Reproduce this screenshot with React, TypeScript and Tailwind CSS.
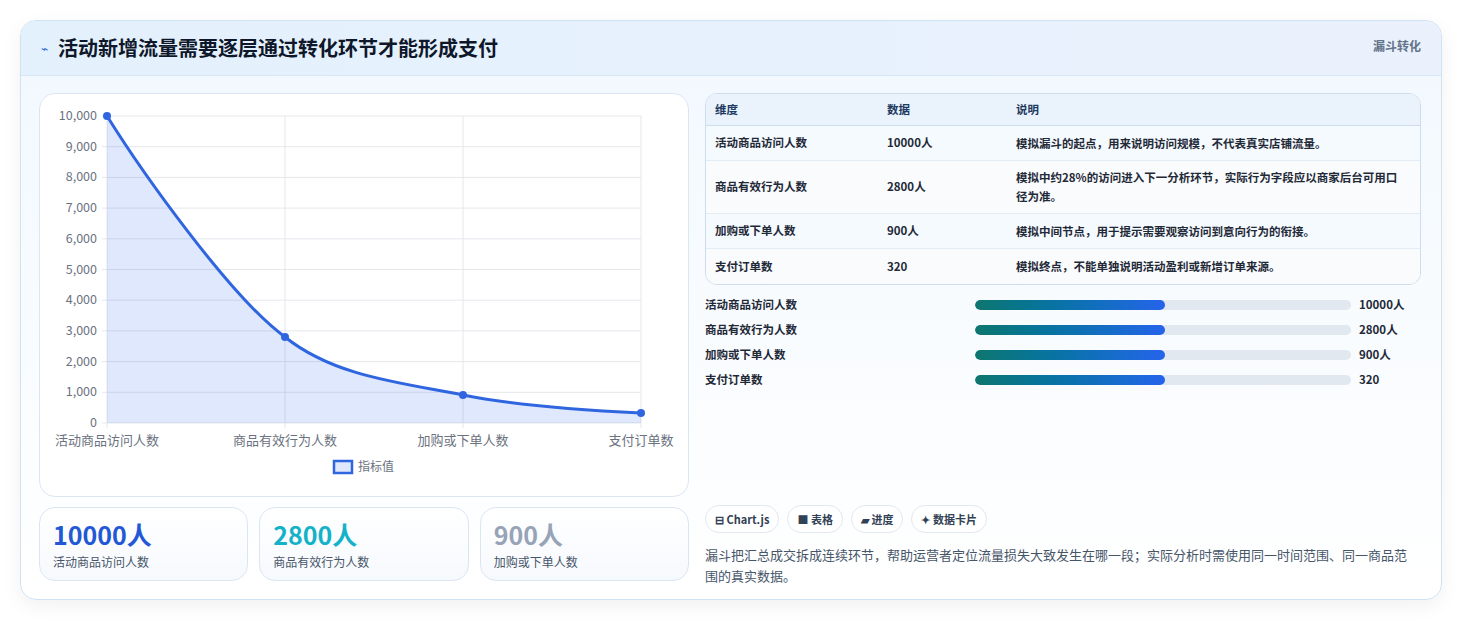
import React from "react";

const yTicks = [10000, 9000, 8000, 7000, 6000, 5000, 4000, 3000, 2000, 1000, 0];
const xs = [67, 245, 423, 601];
const labels = ["活动商品访问人数", "商品有效行为人数", "加购或下单人数", "支付订单数"];
const yOf = (v: number) => 329 - (v / 10000) * 307;

function Chart() {
  const curve = "M67,22 C100,75 190,203 245,243 C295,283 363,289 423,301 C483,313 560,317 601,319";
  return (
    <svg width="648" height="402" className="block">
      {yTicks.map((t) => (
        <g key={t}>
          <line x1={62} x2={601} y1={yOf(t)} y2={yOf(t)} stroke="#e5e7eb" />
          <text x={57} y={yOf(t) + 4} textAnchor="end" fontSize="12.5" fill="#6b7280">{t.toLocaleString("en-US")}</text>
        </g>
      ))}
      {xs.map((x, i) => (
        <g key={x}>
          <line x1={x} x2={x} y1={22} y2={334} stroke="#e5e7eb" />
          <text x={i === 0 ? 67 : i === 3 ? 601 : x} y={351} textAnchor="middle" fontSize="13" fill="#6b7280">{labels[i]}</text>
        </g>
      ))}
      <path d={curve + " L601,329 L67,329 Z"} fill="rgba(37,99,235,0.15)" />
      <path d={curve} fill="none" stroke="#2f66e0" strokeWidth="3" />
      {[[67, 22], [245, 243], [423, 301], [601, 319]].map(([x, y]) => (
        <circle key={x} cx={x} cy={y} r="4" fill="#2f66e0" />
      ))}
      <rect x={294} y={367} width={18} height={12} fill="rgba(37,99,235,0.15)" stroke="#2f66e0" strokeWidth="2.5" />
      <text x={318} y={377} fontSize="12" fill="#6b7280">指标值</text>
    </svg>
  );
}

const rows = [
  ["活动商品访问人数", "10000人", "模拟漏斗的起点，用来说明访问规模，不代表真实店铺流量。"],
  ["商品有效行为人数", "2800人", "模拟中约28%的访问进入下一分析环节，实际行为字段应以商家后台可用口径为准。"],
  ["加购或下单人数", "900人", "模拟中间节点，用于提示需要观察访问到意向行为的衔接。"],
  ["支付订单数", "320", "模拟终点，不能单独说明活动盈利或新增订单来源。"],
];

export default function App() {
  return (
    <div className="w-[1462px] h-[621px] bg-white p-5 pb-0 overflow-hidden" style={{ fontFamily: '"Noto Sans CJK SC", "Noto Sans", sans-serif' }}>
      <div className="w-[1422px] h-[580px] rounded-2xl border border-[#cfe3f3] bg-gradient-to-b from-[#f1f8fe] to-white shadow-[0_6px_20px_rgba(15,23,42,0.06)] overflow-hidden">
        <div className="h-[55px] flex items-center justify-between px-5 bg-gradient-to-r from-[#e3f1fd] to-[#eaf1fc] border-b border-[#d6e8f7]">
          <div className="flex items-center gap-2.5">
            <span className="text-[#2f66e0] text-[12px]">⌁</span>
            <span className="text-[20px] font-bold text-[#0f172a]">活动新增流量需要逐层通过转化环节才能形成支付</span>
          </div>
          <span className="text-[12px] font-semibold text-[#64748b] self-start mt-4">漏斗转化</span>
        </div>
        <div className="flex gap-4 pl-[18px] pr-5 pt-[17px]">
          <div className="w-[650px] flex flex-col gap-[10px]">
            <div className="h-[404px] rounded-2xl border border-[#dbe6f3] bg-white">
              <Chart />
            </div>
            <div className="grid grid-cols-3 gap-[11px]">
              {[["10000人", "text-[#2257d6]", "活动商品访问人数"], ["2800人", "text-[#14b2c8]", "商品有效行为人数"], ["900人", "text-[#97a3b6]", "加购或下单人数"]].map(([v, c, l]) => (
                <div key={l} className="h-[74px] rounded-2xl border border-[#dbe6f3] bg-gradient-to-b from-white to-[#f6f9fd] px-[13px] pt-[9px]">
                  <div className={`text-[25px] font-bold leading-[34px] ${c}`}>{v}</div>
                  <div className="text-[12px] text-[#475569] mt-[2px]">{l}</div>
                </div>
              ))}
            </div>
          </div>
          <div className="w-[716px] flex flex-col">
            <div className="rounded-xl border border-[#cfdcec] overflow-hidden bg-white">
              <div className="flex h-[32px] items-center bg-[#eaf3fc] border-b border-[#cfdcec] text-[11.5px] font-bold text-[#1e3a5f]">
                <div className="w-[181px] pl-[9px]">维度</div>
                <div className="w-[129px]">数据</div>
                <div className="flex-1">说明</div>
              </div>
              {rows.map((r, i) => (
                <div key={i} className={`flex items-center text-[11.5px] font-semibold text-[#1f2937] ${i < 3 ? "border-b border-[#e3ebf4]" : ""} ${i === 1 ? "h-[53px]" : "h-[35px]"} ${i % 2 === 0 ? "bg-[#f5fafe]" : "bg-[#f9fbfd]"}`}>
                  <div className="w-[181px] pl-[9px]">{r[0]}</div>
                  <div className="w-[129px]">{r[1]}</div>
                  <div className="flex-1 pr-3 leading-[19px]">{r[2]}</div>
                </div>
              ))}
            </div>
            <div className="flex flex-col gap-[7px] mt-[11px]">
              {rows.map((r) => (
                <div key={r[0]} className="flex items-center h-[18px] text-[11.5px] font-semibold text-[#1f2937]">
                  <div className="w-[270px]">{r[0]}</div>
                  <div className="w-[376px] h-[10px] rounded-full bg-[#e2e8f0] overflow-hidden">
                    <div className="h-full w-[190px] rounded-full bg-gradient-to-r from-[#0f766e] to-[#2563eb]" />
                  </div>
                  <div className="ml-[8px]">{r[1]}</div>
                </div>
              ))}
            </div>
            <div className="flex gap-2 mt-[116px]">
              {["⊟ Chart.js", "■ 表格", "▰ 进度", "✦ 数据卡片"].map((c) => (
                <span key={c} className="h-[28px] px-[9px] flex items-center rounded-full border border-[#e2e8f0] bg-white text-[11px] font-semibold text-[#334155]">{c}</span>
              ))}
            </div>
            <p className="mt-[11px] pr-[4px] text-[13px] leading-[21px] text-[#475569]">漏斗把汇总成交拆成连续环节，帮助运营者定位流量损失大致发生在哪一段；实际分析时需使用同一时间范围、同一商品范围的真实数据。</p>
          </div>
        </div>
      </div>
    </div>
  );
}
